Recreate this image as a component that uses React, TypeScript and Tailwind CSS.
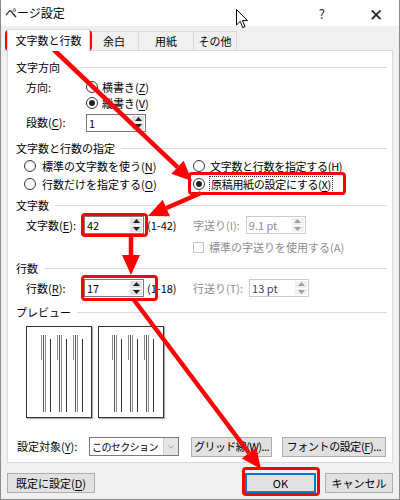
import { ChevronDown } from "lucide-react"

function U({ c }: { c: string }) {
  return <span className="underline underline-offset-[2px]">{c}</span>
}

function Radio({ checked }: { checked?: boolean }) {
  return (
    <span className="w-[12px] h-[12px] rounded-full border border-[#333] bg-white flex items-center justify-center shrink-0">
      {checked && <span className="w-[6px] h-[6px] rounded-full bg-[#222]" />}
    </span>
  )
}

function Header({ label, className = "" }: { label: string; className?: string }) {
  return (
    <div className={`flex items-center gap-[6px] h-[16px] ${className}`}>
      <span>{label}</span>
      <span className="flex-1 h-px bg-[#dcdcdc]" />
    </div>
  )
}

function Tri({ up, color }: { up?: boolean; color: string }) {
  return (
    <svg width="7" height="4" viewBox="0 0 7 4">
      <polygon points={up ? "0,4 7,4 3.5,0" : "0,0 7,0 3.5,4"} fill={color} />
    </svg>
  )
}

function SpinBox({ value, disabled, dim }: { value: string; disabled?: boolean; dim?: boolean }) {
  return (
    <div
      className={`flex w-[60px] h-[18px] border bg-white ${
        disabled ? "border-[#cccccc] text-[#8d8d8d]" : dim ? "border-[#cccccc] text-[#444]" : "border-[#7a7a7a] text-black"
      }`}
    >
      <div className="flex-1 pl-[2px] leading-[16px]">{value}</div>
      <div className="w-[12px] my-[1px] mr-[1px] flex flex-col gap-px">
        <div className={`flex-1 flex items-center justify-center ${disabled || dim ? "bg-[#f0f0f0]" : "bg-[#e1e1e1]"}`}>
          <Tri up color={disabled || dim ? "#a0a0a0" : "#222"} />
        </div>
        <div className={`flex-1 flex items-center justify-center ${disabled || dim ? "bg-[#f0f0f0]" : "bg-[#e1e1e1]"}`}>
          <Tri color={disabled || dim ? "#a0a0a0" : "#222"} />
        </div>
      </div>
    </div>
  )
}

function Btn({ children, className = "" }: { children: React.ReactNode; className?: string }) {
  return (
    <div className={`h-[20px] flex items-center justify-center bg-[#e1e1e1] border border-[#adadad] ${className}`}>
      {children}
    </div>
  )
}

// vertical-writing preview: [x, y1, y2, color]
const PAGE1: [number, number, number, string][] = [
  [14, 8, 33, "#8a8a8a"], [16, 8, 85, "#555"], [18, 8, 85, "#8a8a8a"], [23, 12, 85, "#333"],
  [30, 8, 33, "#8a8a8a"], [32, 8, 85, "#555"], [34, 8, 85, "#8a8a8a"], [39, 12, 85, "#333"],
  [46, 8, 33, "#8a8a8a"], [48, 8, 85, "#555"], [50, 8, 85, "#8a8a8a"], [55, 12, 85, "#333"],
]
const PAGE2: [number, number, number, string][] = [
  [13, 8, 33, "#8a8a8a"], [15, 8, 85, "#555"], [17, 8, 85, "#8a8a8a"], [22, 12, 85, "#333"],
  [29, 8, 33, "#8a8a8a"], [31, 8, 85, "#555"], [33, 8, 85, "#8a8a8a"], [38, 12, 85, "#333"],
  [45, 8, 33, "#8a8a8a"], [47, 8, 85, "#555"], [49, 8, 85, "#8a8a8a"], [54, 12, 85, "#333"],
]

function Page({ lines }: { lines: [number, number, number, string][] }) {
  return (
    <div className="w-[66px] h-[92px] border border-[#333] bg-white shadow-[1px_1px_1px_#b0b0b0]">
      <svg width="64" height="90" viewBox="0 0 64 90">
        {lines.map(([x, y1, y2, c], i) => (
          <line key={i} x1={x + 0.5} y1={y1} x2={x + 0.5} y2={y2} stroke={c} strokeWidth="1" />
        ))}
      </svg>
    </div>
  )
}

function arrowHead(x1: number, y1: number, x2: number, y2: number, L = 20, W = 9) {
  const len = Math.hypot(x2 - x1, y2 - y1)
  const ux = (x2 - x1) / len
  const uy = (y2 - y1) / len
  const bx = x2 - ux * L
  const by = y2 - uy * L
  return {
    bx,
    by,
    pts: `${x2},${y2} ${bx - uy * W},${by + ux * W} ${bx + uy * W},${by - ux * W}`,
  }
}

const ARROWS: [number, number, number, number][] = [
  [52, 49, 191, 181],
  [200, 193, 147, 216],
  [130, 237, 130, 275],
  [133, 300, 260, 469],
]

const BOXES = [
  "left-[4px] top-[30px] w-[87px] h-[21px]",
  "left-[187px] top-[172px] w-[158px] h-[23px]",
  "left-[80px] top-[213px] w-[67px] h-[24px]",
  "left-[80px] top-[275px] w-[77px] h-[26px]",
  "left-[241px] top-[467px] w-[78px] h-[29px]",
]

export default function App() {
  return (
    <div className="relative w-[400px] h-[500px] bg-[#f0f0f0] border-x border-b border-[#8c8c8c] overflow-hidden whitespace-nowrap text-[11px] text-black font-['Noto_Sans_CJK_JP',sans-serif] leading-none">
      {/* title bar */}
      <div className="h-[26px] bg-white flex items-center pl-[4px] text-[12px]">
        <span>ページ設定</span>
        <span className="ml-auto mr-[44px] text-[13px] text-[#222]">?</span>
        <span className="mr-[16px] text-[17px] font-light text-[#222]">✕</span>
      </div>

      {/* tabs */}
      <div className="h-[24px] flex items-end pl-[6px]">
        <div className="relative z-10 -mb-px w-[83px] h-[22px] bg-white border border-b-0 border-[#d9d9d9] flex items-center justify-center">
          文字数と行数
        </div>
        <div className="w-[49px] h-[19px] border-t border-r border-[#d9d9d9] flex items-center justify-center">余白</div>
        <div className="w-[55px] h-[19px] border-t border-r border-[#d9d9d9] flex items-center justify-center">用紙</div>
        <div className="w-[43px] h-[19px] border-t border-r border-[#d9d9d9] flex items-center justify-center">その他</div>
      </div>

      {/* panel */}
      <div className="ml-[6px] w-[386px] h-[413px] bg-white border border-[#d9d9d9] pl-[8px] pr-[5px] pt-[8px]">
        <Header label="文字方向" />
        <div className="mt-[4px] h-[16px] flex items-center pl-[10px]">
          <span className="w-[60px]">方向:</span>
          <Radio />
          <span className="ml-[4px]">横書き(<U c="Z" />)</span>
        </div>
        <div className="h-[16px] flex items-center pl-[70px]">
          <Radio checked />
          <span className="ml-[4px]">縦書き(<U c="V" />)</span>
        </div>
        <div className="mt-[2px] h-[19px] flex items-center pl-[10px]">
          <span className="w-[60px]">段数(<U c="C" />):</span>
          <SpinBox value="1" />
        </div>

        <Header label="文字数と行数の指定" className="mt-[8px]" />
        <div className="mt-[2px] h-[16px] flex items-center pl-[8px]">
          <div className="w-[169px] flex items-center gap-[6px]">
            <Radio />
            <span>標準の文字数を使う(<U c="N" />)</span>
          </div>
          <div className="flex items-center gap-[5px] tracking-[-0.3px]">
            <Radio />
            <span>文字数と行数を指定する(<U c="H" />)</span>
          </div>
        </div>
        <div className="mt-[2px] h-[16px] flex items-center pl-[8px]">
          <div className="w-[169px] flex items-center gap-[6px]">
            <Radio />
            <span>行数だけを指定する(<U c="O" />)</span>
          </div>
          <div className="flex items-center gap-[4px] tracking-[-0.3px]">
            <Radio checked />
            <span className="border border-dotted border-[#333] px-px py-[2px]">原稿用紙の設定にする(<U c="X" />)</span>
          </div>
        </div>

        <Header label="文字数" className="mt-[5px]" />
        <div className="mt-[2px] h-[20px] flex items-center pl-[10px]">
          <div className="w-[167px] flex items-center">
            <span className="w-[58px]">文字数(<U c="E" />):</span>
            <SpinBox value="42" />
            <span className="ml-[3px]">(1-42)</span>
          </div>
          <span className="text-[#8d8d8d]">字送り(I):</span>
          <div className="ml-[6px]">
            <SpinBox value="9.1 pt" disabled />
          </div>
        </div>
        <div className="mt-[4px] h-[16px] flex items-center pl-[177px] gap-[5px] text-[#8d8d8d]">
          <span className="w-[11px] h-[11px] border border-[#c4c4c4] bg-white" />
          <span>標準の字送りを使用する(A)</span>
        </div>

        <Header label="行数" className="mt-[5px]" />
        <div className="mt-[2px] h-[20px] flex items-center pl-[10px]">
          <div className="w-[167px] flex items-center">
            <span className="w-[58px]">行数(<U c="R" />):</span>
            <SpinBox value="17" />
            <span className="ml-[3px]">(1-18)</span>
          </div>
          <span className="text-[#8d8d8d]">行送り(T):</span>
          <div className="ml-[6px]">
            <SpinBox value="13 pt" dim />
          </div>
        </div>

        <Header label="プレビュー" className="mt-[6px]" />
        <div className="mt-[6px] pl-[10px] flex gap-[6px]">
          <Page lines={PAGE1} />
          <Page lines={PAGE2} />
        </div>

        <div className="mt-[18px] h-[21px] flex items-center pl-[1px]">
          <span className="w-[72px]">設定対象(<U c="Y" />):</span>
          <div className="w-[90px] h-[19px] border border-[#7a7a7a] bg-white flex">
            <span className="flex-1 overflow-hidden pl-[2px] leading-[17px] text-[10px] tracking-[-0.6px]">このセクション</span>
            <span className="w-[15px] bg-[#e5e5e5] border-l border-[#cfcfcf] flex items-center justify-center">
              <ChevronDown size={10} strokeWidth={1.2} color="#555" />
            </span>
          </div>
          <Btn className="ml-[12px] w-[81px] tracking-[-0.6px]">
            グリッド線(<U c="W" />)...
          </Btn>
          <Btn className="ml-[10px] w-[104px] tracking-[-0.4px]">
            フォントの設定(<U c="F" />)...
          </Btn>
        </div>
      </div>

      {/* bottom buttons */}
      <div className="mt-[10px] flex px-[6px]">
        <Btn className="w-[88px]">
          既定に設定(<U c="D" />)
        </Btn>
        <div className="ml-auto h-[20px] w-[71px] flex items-center justify-center bg-[#e1e1e1] border-2 border-[#0078d7]">
          OK
        </div>
        <Btn className="ml-[9px] w-[68px]">キャンセル</Btn>
      </div>

      {/* mouse cursor */}
      <svg className="absolute left-[235px] top-[9px]" width="13" height="20" viewBox="0 0 13 20">
        <path d="M0.5 0.5 L0.5 16 L4.2 12.4 L6.8 18.6 L9 17.6 L6.5 11.6 L11.5 11.6 Z" fill="#fff" stroke="#000" strokeWidth="1" strokeLinejoin="round" />
      </svg>

      {/* red annotation boxes */}
      {BOXES.map((b, i) => (
        <div key={i} className={`absolute ${b} border-[3px] border-[#f00] rounded-[4px]`} />
      ))}

      {/* red annotation arrows */}
      <svg className="absolute inset-0 pointer-events-none" width="400" height="500" viewBox="0 0 400 500">
        {ARROWS.map(([x1, y1, x2, y2], i) => {
          const h = arrowHead(x1, y1, x2, y2)
          return (
            <g key={i}>
              <line x1={x1} y1={y1} x2={h.bx} y2={h.by} stroke="#f00" strokeWidth="4.5" />
              <polygon points={h.pts} fill="#f00" />
            </g>
          )
        })}
      </svg>
    </div>
  )
}
